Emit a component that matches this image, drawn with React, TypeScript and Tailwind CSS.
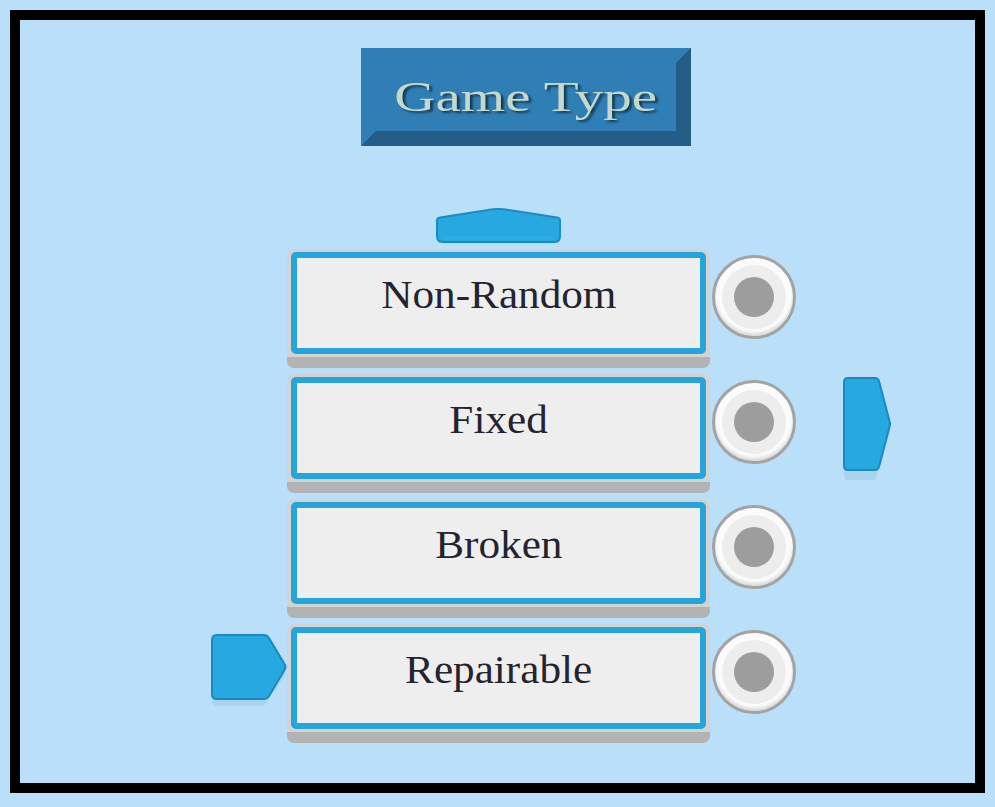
import React from "react";

const serif = "font-['Liberation_Serif','Times_New_Roman',serif]";

function UpTab() {
  return (
    <svg width="125" height="35" viewBox="0 0 125 35">
      <path
        d="M6,34 Q1,34 1,28 L1,12 Q1,10 4,9.5 L52,2 Q62.5,0 73,2 L121,9.5 Q124,10 124,12 L124,28 Q124,34 119,34 Z"
        fill="#27a8e1"
        stroke="#1b8cc3"
        strokeWidth="2"
      />
      <path d="M8,30 L117,30" stroke="#33b3ea" strokeWidth="3" opacity="0.6" />
    </svg>
  );
}

function RightTab() {
  return (
    <svg width="48" height="106" viewBox="0 0 48 106">
      <path
        d="M5,9 L32,9 L47,54 L32,103 L5,103 Q1,103 1,99 L1,13 Q1,9 5,9 Z"
        fill="#9fc9e2"
        opacity="0.55"
      />
      <path
        d="M5,1 L32,1 Q35,1 36,4 L46.5,44 Q47.5,47 46.5,50 L36,90 Q35,93 32,93 L5,93 Q1,93 1,89 L1,5 Q1,1 5,1 Z"
        fill="#27a8e1"
        stroke="#1b89c1"
        strokeWidth="2"
      />
    </svg>
  );
}

function LeftTab() {
  return (
    <svg width="76" height="74" viewBox="0 0 76 74">
      <path
        d="M6,8 L53,8 L75,40 L53,72 L6,72 Q1,72 1,67 L1,13 Q1,8 6,8 Z"
        fill="#9fc9e2"
        opacity="0.55"
      />
      <path
        d="M6,1 L53,1 Q56,1 58,4 L73.5,30 Q75.5,33 73.5,36 L58,62 Q56,65 53,65 L6,65 Q1,65 1,60 L1,6 Q1,1 6,1 Z"
        fill="#27a8e1"
        stroke="#1b89c1"
        strokeWidth="2"
      />
    </svg>
  );
}

function Radio() {
  return (
    <div className="ml-[2px] mt-[6px] flex h-[84px] w-[84px] items-center justify-center rounded-full border-[3px] border-[#a3a3a3] bg-[#fbfbfb] shadow-[inset_0_-3px_3px_rgba(0,0,0,0.12)]">
      <div className="flex h-[64px] w-[64px] items-center justify-center rounded-full bg-[#ededed]">
        <div className="h-[40px] w-[40px] rounded-full bg-[#9d9d9d]" />
      </div>
    </div>
  );
}

type Row = { label: string; left?: boolean; right?: boolean };

const rows: Row[] = [
  { label: "Non-Random" },
  { label: "Fixed", right: true },
  { label: "Broken" },
  { label: "Repairable", left: true },
];

function OptionRow({ row }: { row: Row }) {
  return (
    <div className="flex items-start">
      <div className="w-[76px] pt-[10px]">{row.left && <LeftTab />}</div>
      <div className="h-[119px] w-[423px] rounded-[7px] border-b-[11px] border-b-[#b3b3b3] bg-[#d3d3d3] px-[4px] pt-[3px] pb-[3px]">
        <div className="flex h-[102px] items-center justify-center rounded-[5px] border-[6px] border-[#26a4dc] bg-[#eeeeee] pb-[16px]">
          <span
            className={`${serif} inline-block scale-x-[1.08] text-[40px] leading-none text-[#24242e]`}
          >
            {row.label}
          </span>
        </div>
      </div>
      <Radio />
      <div className="ml-[47px] pt-[3px]">{row.right && <RightTab />}</div>
    </div>
  );
}

export default function App() {
  return (
    <div className="h-[807px] w-[995px] bg-[#b9e0f8] px-[10px] pt-[10px] pb-[14px]">
      <div className="flex h-full flex-col items-start border-[10px] border-black bg-[#b9e0f8]">
        <div className="ml-[341px] mt-[28px] flex h-[98px] w-[330px] items-center justify-center border-t-[15px] border-l-[15px] border-r-[15px] border-b-[15px] border-t-[#2f7fb6] border-l-[#2f7fb6] border-r-[#245e88] border-b-[#245e88] bg-[#2f7fb6]">
          <span
            className={`${serif} inline-block scale-x-[1.36] text-[42px] leading-none text-[#c4d8cc] [text-shadow:2px_2px_2px_#163a52]`}
          >
            Game Type
          </span>
        </div>

        <div className="ml-[416px] mt-[62px] flex">
          <UpTab />
        </div>

        <div className="ml-[191px] mt-[6px] flex flex-col gap-[6px]">
          {rows.map((r) => (
            <OptionRow key={r.label} row={r} />
          ))}
        </div>
      </div>
    </div>
  );
}
